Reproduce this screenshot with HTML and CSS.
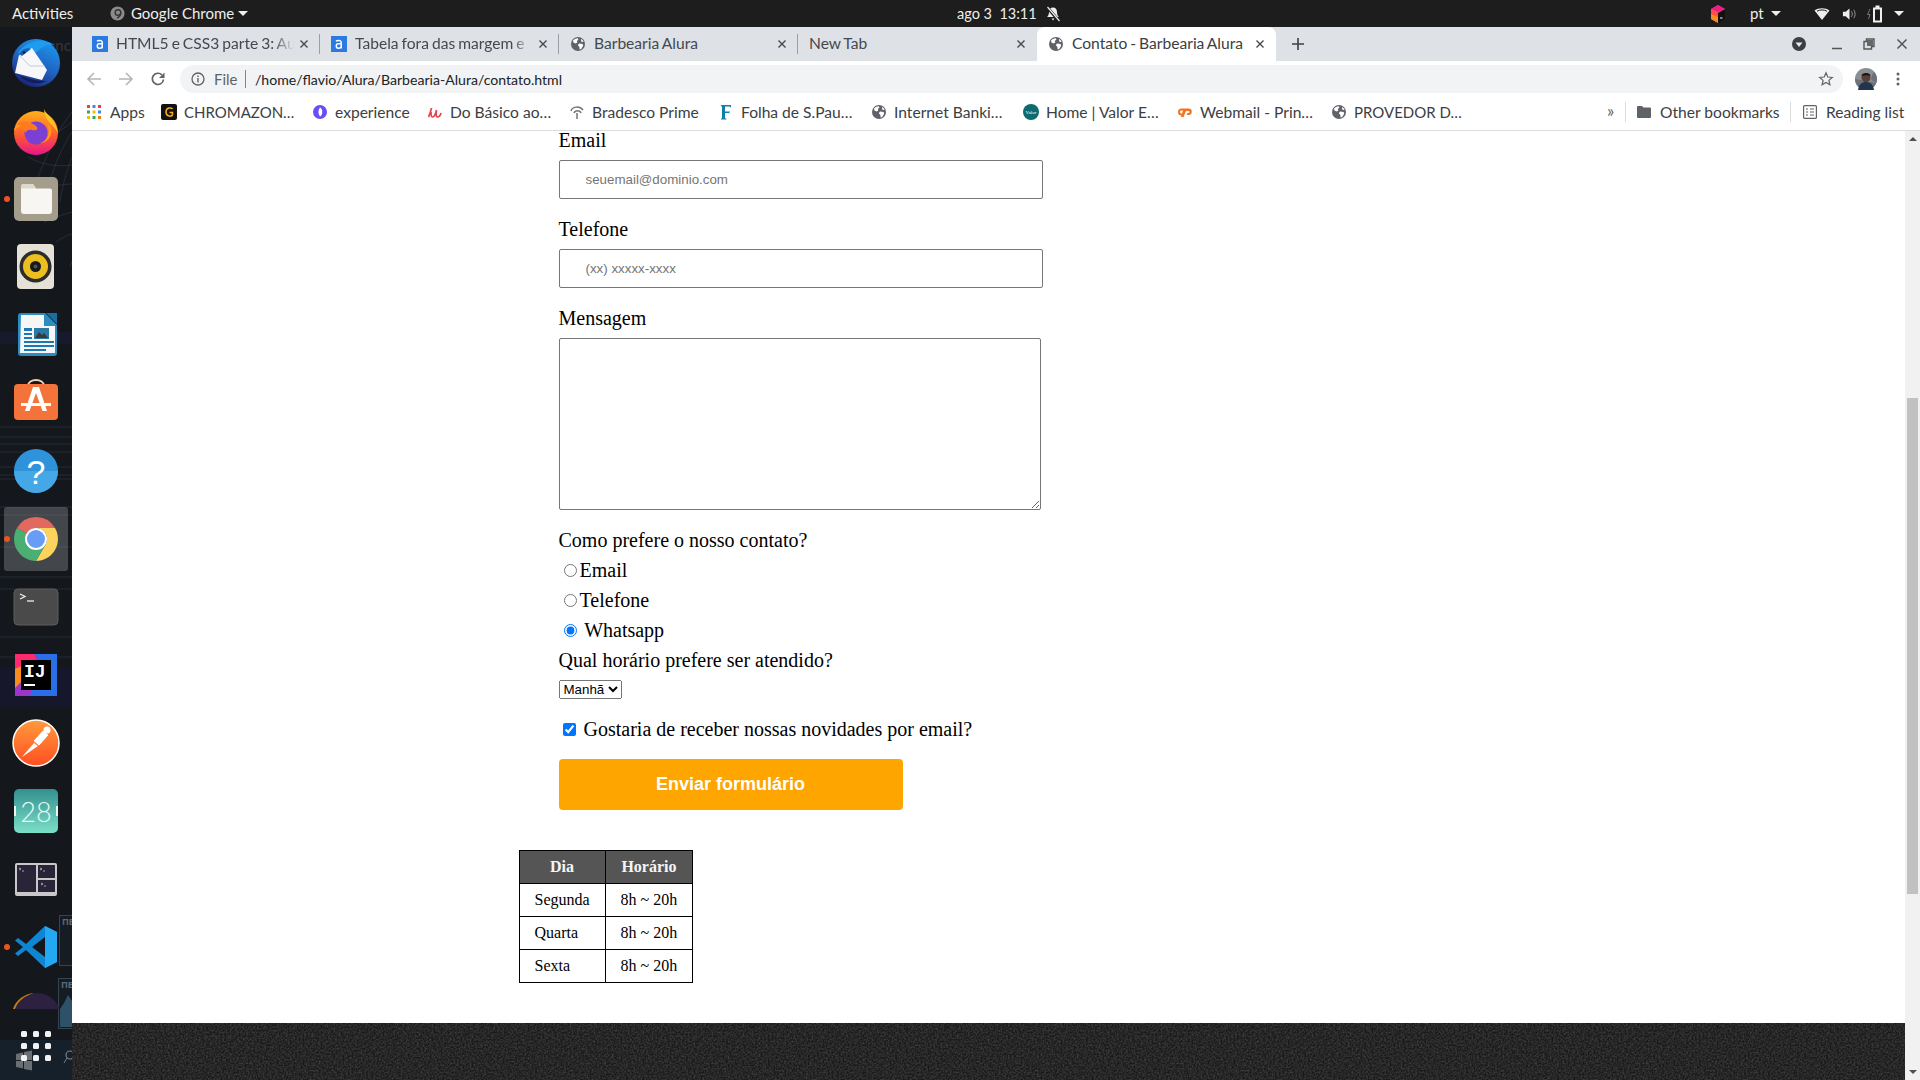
FILE: index.html
```html
<!DOCTYPE html>
<html lang="pt">
<head>
<meta charset="utf-8">
<title>Contato - Barbearia Alura</title>
<link rel="stylesheet" href="styles.css">
</head>
<body>
<svg class="defs" width="0" height="0" aria-hidden="true">
  <defs>
    <symbol id="globe" viewBox="0 0 16 16">
      <circle cx="8" cy="8" r="7" fill="#5f6368"/>
      <path d="M3 4.500c1.500-1.600 3.300-2.300 4.800-2.300l.6 1.400-1.500 1.300.4 1.500-1.700 1.100-2.200-.9zM9 7.500l3.700.4.500 1.800-2 3.300-1.500.4-.4-2.600-1.500-1.500zM11 2.800l2 1.700.5 1.500-2.200-.3z" fill="#fff"/>
    </symbol>
    <symbol id="alura" viewBox="0 0 16 16">
      <rect width="16" height="16" fill="#2a7ae2"/>
      <path d="M5 5.200c1-1 5-1.300 5.200.8V12.500M10.200 7.800H7.300C4.600 7.800 4.600 12.200 7.300 12.200c1.500 0 2.900-.7 2.900-2" fill="none" stroke="#fff" stroke-width="1.500"/>
    </symbol>
    <symbol id="close" viewBox="0 0 10 10">
      <path d="M1.500 1.500l7 7M8.500 1.500l-7 7" stroke="#45494e" stroke-width="1.400" fill="none"/>
    </symbol>
    <linearGradient id="tb" x1=".8" y1="0" x2=".3" y2="1"><stop offset="0" stop-color="#1c9bf0"/><stop offset=".55" stop-color="#1f62c0"/><stop offset="1" stop-color="#1b2272"/></linearGradient>
    <linearGradient id="ff" x1="0" y1="0" x2="0" y2="1"><stop offset="0" stop-color="#ffb11b"/><stop offset=".55" stop-color="#ff5a2e"/><stop offset="1" stop-color="#e8148c"/></linearGradient>
    <linearGradient id="pm" x1="0" y1="0" x2="0" y2="1"><stop offset="0" stop-color="#ff9a3c"/><stop offset="1" stop-color="#ff4f22"/></linearGradient>
    <linearGradient id="cal" x1="0" y1="0" x2="0" y2="1"><stop offset="0" stop-color="#34908f"/><stop offset="1" stop-color="#7be0c8"/></linearGradient>
    <filter id="noise" x="0" y="0" width="100%" height="100%">
      <feTurbulence type="fractalNoise" baseFrequency="0.55" numOctaves="2" seed="4"/>
      <feColorMatrix values="0 0 0 0 1 0 0 0 0 1 0 0 0 0 1 0.3 0 0 0 -0.09"/>
    </filter>
  </defs>
</svg>

<header class="topbar">
  <div class="tb-activities">Activities</div>
  <div class="tb-app">
    <svg class="ic14" viewBox="0 0 16 16"><circle cx="8" cy="8" r="7.500" fill="#8b8b8b"/><circle cx="8.500" cy="7" r="3" fill="none" stroke="#333" stroke-width="1.500"/><path d="M11.500 7c0 3-2 5-4 6" stroke="#333" stroke-width="1.500" fill="none"/></svg>
    <span>Google Chrome</span><i class="caret caret-app"></i>
  </div>
  <div class="tb-clock">
    <span class="tb-time">ago 3&nbsp; 13:11</span>
    <svg class="ic16" viewBox="0 0 16 16"><path d="M8 1.500c-2.500 0-4 1.800-4 4.500 0 2.500-.8 4-2 5h12c-1.200-1-2-2.500-2-5 0-2.700-1.500-4.500-4-4.500zM6.500 12.500h3L8 14.500z" fill="#eee"/><path d="M2 1l12 14" stroke="#1d1d1d" stroke-width="3"/><path d="M2.500 1l12 14" stroke="#eee" stroke-width="1.200"/></svg>
  </div>
  <div class="tb-tray">
    <svg class="tray-jb" viewBox="0 0 14 18"><path d="M7 0l7 4v10l-7 4-7-4V4z" fill="#111"/><path d="M7 0l7 4-7 4v10l-7-4V4z" fill="#fb4f4f"/><path d="M7 0l7 4-7 3-7-3z" fill="#e91e8c"/><path d="M0 9v5l7 4V12z" fill="#f98c1f"/><path d="M9 13h2.500" stroke="#fff"/></svg>
    <span class="tray-pt">pt</span><i class="caret caret-pt"></i>
    <svg class="tray-wifi" viewBox="0 0 16 14"><path d="M8 13L.5 3.500C4.500.5 11.500.5 15.500 3.500z" fill="#eee"/><path d="M3 4.200c3-1.700 7-1.700 10 0" stroke="#1d1d1d" fill="none"/></svg>
    <svg class="tray-vol" viewBox="0 0 16 14"><path d="M1 4.500h3L8 1v12L4 9.500H1z" fill="#eee"/><path d="M10 4c1.300 1.700 1.300 4.300 0 6M12.500 2.500c2 2.500 2 6.500 0 9" stroke="#999" fill="none"/></svg>
    <svg class="tray-bat" viewBox="0 0 18 18"><path d="M3 4L.5 9.500H3L1.500 14" stroke="#777" fill="none"/><path d="M8.500 2.500V.5h4v2h2.500v15H6v-15z" fill="#eee"/><rect x="8" y="4.500" width="5" height="11" fill="#1d1d1d"/></svg>
    <i class="caret caret-end"></i>
  </div>
</header>

<div class="desktop">
  <nav class="dock">
    <svg class="wallpaper" viewBox="0 0 72 1053" width="72" height="1053" aria-hidden="true">
      <g fill="none" stroke="#39404a" stroke-width=".7" opacity=".75">
        <path d="M38 150C50 120 60 100 72 85M48 160C55 135 65 115 72 105M60 175c3-20 8-35 12-45M28 130c14 8 30 10 44 8M32 165c14-4 28-8 40-8M44 195c10-4 20-8 28-10M36 115c12-4 24-10 36-20M56 215c6-4 11-7 16-8M70 240l2-6"/>
      </g>
      <g stroke="#20262d" stroke-width="1.500" opacity=".9">
        <path d="M0 400h72M0 410h72M0 417h72M0 425h72M0 440h72M0 448h72M0 452h72M0 480h72M0 488h72M0 520h72M0 550h72M0 562h72M0 610h72M0 630h72"/>
      </g>
      <rect y="305" width="72" height="12" fill="#171a2c"/>
      <rect y="640" width="72" height="40" fill="#16172a"/>
      <text x="47" y="24" class="wp-text">unc</text>
      <rect x="59.500" y="888.500" width="14" height="50" fill="#151c24" stroke="#37434f"/>
      <text x="62" y="898" class="wp-ru">ПЕ</text>
      <rect x="58.500" y="951.500" width="15" height="50" fill="#151c24" stroke="#37434f"/>
      <text x="61" y="961" class="wp-ru">ПЕ</text>
      <path d="M60 1000v-18l4-6 4-8 4 6v26z" fill="#2d5268"/>
      <rect y="1013" width="72" height="40" fill="#15202a"/>
      <path d="M16 1027l7-1.500V1033h-7zM24 1025l8-1.500V1033h-8zM16 1034h7v7.500l-7-1.500zM24 1034h8v9.500l-8-1.500z" fill="#6a6f74"/>
      <circle cx="70" cy="1028" r="4" fill="none" stroke="#7a8087" stroke-width="1.200"/><path d="M67 1031l-3 5" stroke="#7a8087"/>
    </svg>
    <div class="dock-list">
      <div class="dock-item"><svg class="app" viewBox="0 0 48 48"><circle cx="24" cy="24" r="24" fill="url(#tb)"/><path d="M6 14C12 4 30-3 42 6c-7-1-12 2-16 6l-8 4z" fill="#1d9cf0"/><path d="M7 16L20 9l15 22-5 10L3 34z" fill="#f7f7f9"/><path d="M7 16l11 11 15 0" fill="none" stroke="#b9c0cc" stroke-width=".8"/><path d="M7 15c3-5 8-7 12-5l-9 7z" fill="#1b5fb4"/><circle cx="12" cy="13.500" r="1.200" fill="#0b1a3a"/><path d="M8 37c8 8 18 9 26 5-8 0-18-2-26-5z" fill="#141b5e"/></svg></div>
      <div class="dock-item"><svg class="app" viewBox="0 0 48 48"><circle cx="24" cy="26" r="22" fill="url(#ff)"/><path d="M32 2c2 6 12 10 14 24-4-8-14-12-14-24z" fill="#ffc21f"/><path d="M6 14c-1 3-3 5-4 10 4-5 10-7 16-6-4-3-9-3-12-4z" fill="#ff9a1f"/><circle cx="24" cy="26" r="11.500" fill="#7b3fd4"/><path d="M4 17c6-4 14-3 20 2 3 3 1 5-4 4-3-1-5 0-7 3 0-5-5-8-9-9z" fill="#ff7a1f"/><path d="M35 17c4 8 1 17-7 19 7 0 13-7 11-15z" fill="#ff9a1f"/></svg></div>
      <div class="dock-item has-dot"><svg class="app" viewBox="0 0 48 48"><rect x="2" y="2" width="44" height="44" rx="5" fill="#a49d8b"/><path d="M9 12a3 3 0 0 1 3-3h9l3 4.500h14a2 2 0 0 1 2 2V36a3 3 0 0 1-3 3H12a3 3 0 0 1-3-3z" fill="#f8f6f3"/><path d="M9 12a3 3 0 0 1 3-3h9l3 4.500H9z" fill="#dcd8cd"/></svg></div>
      <div class="dock-item"><svg class="app" viewBox="0 0 48 48"><rect x="5" y="1" width="37" height="45" rx="4" fill="#e6e1d6"/><circle cx="23.500" cy="23.500" r="16" fill="#2d2c2b"/><circle cx="23.500" cy="23.500" r="12.500" fill="#eabf1f"/><circle cx="23.500" cy="23.500" r="5.500" fill="#1a1a1a"/><circle cx="23.500" cy="23.500" r="2" fill="#55504a"/></svg></div>
      <div class="dock-item"><svg class="app" viewBox="0 0 48 48"><path d="M9 2h24l12 12v28a3 3 0 0 1-3 3H9a3 3 0 0 1-3-3V5a3 3 0 0 1 3-3z" fill="#2a8cc0"/><path d="M9 4h23v11h11v27H8z" fill="#f6f6f6"/><path d="M34 2l11 0v11z" fill="#1a6f9e"/><path d="M12 17h8v3h-8zM12 22h8v2h-8zM12 26h8v2h-8zM12 30h30v2H12zM12 34h30v2H12zM12 38h22v2H12z" fill="#1a78b4"/><rect x="22" y="17" width="15" height="11" fill="#2a7aa5"/><path d="M23 27l4-6 3 3 2-2 4 5z" fill="#3a3a3a"/></svg></div>
      <div class="dock-item"><svg class="app" viewBox="0 0 48 48"><path d="M16 7c0-8 16-8 16 0" fill="none" stroke="#f3d3ae" stroke-width="2"/><rect x="2" y="5" width="44" height="36" rx="4" fill="#f4733a"/><path d="M21 8h6l8 24h-4.500L24 14l-6.500 18H13z" fill="#fff"/><path d="M9 24h30v3H9z" fill="#fff"/></svg></div>
      <div class="dock-item"><svg class="app" viewBox="0 0 48 48"><circle cx="24" cy="24" r="22" fill="#2f93dc"/><path d="M2 24h44a22 22 0 0 1-44 0z" fill="#45a7e6"/><text x="24" y="37" class="app-help">?</text></svg></div>
      <div class="dock-item has-dot active-item"><svg class="app" viewBox="0 0 48 48"><path d="M24 2A22 22 0 0 1 43 13H24A11 11 0 0 0 14.500 18.500L5 13A22 22 0 0 1 24 2Z" fill="#db4437"/><path d="M43 13A22 22 0 0 1 24 46L33.500 29.500A11 11 0 0 0 24 13Z" fill="#fcc934"/><path d="M5 13A22 22 0 0 0 24 46L33.500 29.500A11 11 0 0 1 14.500 18.500Z" fill="#1e9c52"/><circle cx="24" cy="24" r="11" fill="#fff"/><circle cx="24" cy="24" r="9" fill="#4285f4"/></svg></div>
      <div class="dock-item"><svg class="app" viewBox="0 0 48 48"><rect x="2" y="6" width="44" height="36" rx="4" fill="#4a4a4a" stroke="#5c5c5c"/><path d="M8 11l5 2.500-5 2.500" fill="none" stroke="#eee" stroke-width="1.300"/><path d="M15 18h7" stroke="#eee" stroke-width="1.300"/></svg></div>
      <div class="dock-item"><svg class="app" viewBox="0 0 48 48"><rect x="3" y="3" width="42" height="42" fill="#2a6fe8"/><path d="M3 3h19l6 6-10 36H3z" fill="#9b36c8"/><path d="M3 3h19l3 6-12 10-10 2z" fill="#ff2a6d"/><path d="M3 18l6-3v16l-6 6z" fill="#f98c1f"/><rect x="9" y="9" width="30" height="30" fill="#000"/><text x="12" y="26" class="app-ij">IJ</text><rect x="12" y="33" width="11" height="2" fill="#fff"/></svg></div>
      <div class="dock-item"><svg class="app" viewBox="0 0 48 48"><circle cx="24" cy="24" r="23" fill="url(#pm)" stroke="#fff" stroke-width="1.500"/><path d="M10 38l12-14 4 3z" fill="#fff"/><path d="M21 22l10-11 6 5-10 11z" fill="#fff" stroke="#ff7a33"/><circle cx="35" cy="11" r="3.500" fill="#fff"/></svg></div>
      <div class="dock-item"><svg class="app" viewBox="0 0 48 48"><rect x="2" y="2" width="44" height="44" rx="5" fill="url(#cal)"/><rect x="2" y="19" width="2" height="10" fill="#e8f6f2"/><rect x="44" y="19" width="2" height="10" fill="#e8f6f2"/><text x="24" y="35" class="app-cal">28</text></svg></div>
      <div class="dock-item"><svg class="app" viewBox="0 0 48 48"><rect x="3" y="8" width="42" height="33" rx="2" fill="#c8c8c8"/><rect x="5" y="10" width="19" height="27" fill="#2a2438"/><rect x="26" y="10" width="17" height="13" fill="#2a2438"/><rect x="26" y="25" width="17" height="12" fill="#2a2438"/><path d="M7 13l2 1-2 1M10 16h2M28 13l2 1-2 1M31 16h2M29 28l2 1-2 1M32 31h2" stroke="#ddd" fill="none" stroke-width=".7"/></svg></div>
      <div class="dock-item has-dot"><svg class="app" viewBox="0 0 48 48"><path fill-rule="evenodd" d="M33 3L14 21 6 15 3 17.500 11 24 3 30.500 6 33 14 27 33 45 45 39V9ZM33 14L20 24 33 34Z" fill="#0e86d4"/><path d="M33 3L45 9V39L33 45Z" fill="#24a8f2"/></svg></div>
      <div class="dock-item"><svg class="app" viewBox="0 0 48 48"><circle cx="25" cy="26" r="24" fill="#2c2140"/><path d="M1 18A24 24 0 0 1 22 2C12 5 6 10 3 18z" fill="#c47f1a"/></svg></div>
    </div>
    <div class="show-apps">
      <div class="dots"><i></i><i></i><i></i><i></i><i></i><i></i><i></i><i></i><i></i></div>
    </div>
  </nav>

  <div class="browser">
    <div class="tabstrip">
      <div class="tab sep"><svg class="fav"><use href="#alura"/></svg><span class="tab-title fade">HTML5 e CSS3 parte 3: Au</span><svg class="tab-x"><use href="#close"/></svg></div>
      <div class="tab sep"><svg class="fav"><use href="#alura"/></svg><span class="tab-title fade">Tabela fora das margem e</span><svg class="tab-x"><use href="#close"/></svg></div>
      <div class="tab sep"><svg class="fav glob"><use href="#globe"/></svg><span class="tab-title">Barbearia Alura</span><svg class="tab-x"><use href="#close"/></svg></div>
      <div class="tab"><span class="tab-title">New Tab</span><svg class="tab-x"><use href="#close"/></svg></div>
      <div class="tab tab-active"><svg class="fav glob"><use href="#globe"/></svg><span class="tab-title">Contato - Barbearia Alura</span><svg class="tab-x"><use href="#close"/></svg></div>
      <svg class="newtab" viewBox="0 0 14 14"><path d="M7 1v12M1 7h12" stroke="#3c4043" stroke-width="1.600"/></svg>
      <div class="winctl">
        <svg class="wc-profile" viewBox="0 0 14 14"><circle cx="7" cy="7" r="7" fill="#3c4043"/><path d="M3.500 5.500h7L7 10z" fill="#e8eaed"/></svg>
        <svg class="wc-min" viewBox="0 0 12 12"><path d="M1 10.500h10" stroke="#555" stroke-width="1.500"/></svg>
        <svg class="wc-rest" viewBox="0 0 12 12"><path d="M3.500 1h7.500v7.500H8.500V11H1V3.500h2.500z" fill="none" stroke="#555" stroke-width="1.400"/><rect x="4" y="2" width="6" height="6" fill="#666"/></svg>
        <svg class="wc-close" viewBox="0 0 12 12"><path d="M1.500 1.500l9 9M10.500 1.500l-9 9" stroke="#555" stroke-width="1.500"/></svg>
      </div>
    </div>

    <div class="toolbar">
      <svg class="tool" viewBox="0 0 16 16"><path d="M15 8H2M8 2L2 8l6 6" fill="none" stroke="#b3b6ba" stroke-width="1.600"/></svg>
      <svg class="tool" viewBox="0 0 16 16"><path d="M1 8h13M8 2l6 6-6 6" fill="none" stroke="#b3b6ba" stroke-width="1.600"/></svg>
      <svg class="tool" viewBox="0 0 16 16"><path d="M13.500 8.500A5.600 5.600 0 1 1 12 4" fill="none" stroke="#5f6368" stroke-width="1.700"/><path d="M14.500 1.500V7H9z" fill="#5f6368"/></svg>
      <div class="omnibox">
        <svg class="omni-info" viewBox="0 0 14 14"><circle cx="7" cy="7" r="6" fill="none" stroke="#5f6368" stroke-width="1.300"/><path d="M7 6v4.500M7 3.500v1.500" stroke="#5f6368" stroke-width="1.400"/></svg>
        <span class="omni-file">File</span>
        <span class="omni-url">/home/flavio/Alura/Barbearia-Alura/contato.html</span>
        <svg class="omni-star" viewBox="0 0 16 16"><path d="M8 1.800l1.800 4.200 4.500.4-3.400 3 1 4.400L8 11.500l-3.900 2.300 1-4.400-3.400-3 4.500-.4z" fill="none" stroke="#5f6368" stroke-width="1.200"/></svg>
      </div>
      <svg class="avatar" viewBox="0 0 22 22"><circle cx="11" cy="11" r="11" fill="#8a8f96"/><path d="M0 11a11 11 0 0 0 22 0c0-2-1-5-3-7l-2 3-1 5 6 3z" fill="#6d7278"/><path d="M3 22c1-6 4-8 8-8s7 2 8 8z" fill="#23344f"/><circle cx="11" cy="9.500" r="4.500" fill="#5a3f34"/><path d="M6.500 8c0-4 9-4 9 0-3-1-6-1-9 0z" fill="#1c1714"/></svg>
      <svg class="menu" viewBox="0 0 4 16"><circle cx="2" cy="3" r="1.500" fill="#5f6368"/><circle cx="2" cy="8" r="1.500" fill="#5f6368"/><circle cx="2" cy="13" r="1.500" fill="#5f6368"/></svg>
    </div>

    <div class="bookmarks">
      <div class="bm"><svg class="bm-ic" viewBox="0 0 14 14"><g><rect width="3" height="3" fill="#ea4335"/><rect x="5.500" width="3" height="3" fill="#4285f4"/><rect x="11" width="3" height="3" fill="#ea4335"/><rect y="5.500" width="3" height="3" fill="#34a853"/><rect x="5.500" y="5.500" width="3" height="3" fill="#fbbc05"/><rect x="11" y="5.500" width="3" height="3" fill="#4285f4"/><rect y="11" width="3" height="3" fill="#fbbc05"/><rect x="5.500" y="11" width="3" height="3" fill="#34a853"/><rect x="11" y="11" width="3" height="3" fill="#ea8600"/></g></svg><span>Apps</span></div>
      <div class="bm"><svg class="bm-ic16" viewBox="0 0 16 16"><rect width="16" height="16" rx="2" fill="#111"/><path d="M11.500 5C11 3.500 5 3 5 8s6 5 6.500 2.500V8.500H8.500" fill="none" stroke="#f2b01e" stroke-width="1.500"/></svg><span class="bm-caps">CHROMAZON…</span></div>
      <div class="bm"><svg class="bm-ic16" viewBox="0 0 16 16"><circle cx="8" cy="8" r="7" fill="#6a4ef5"/><path d="M8 3.500c3 1 3 8 0 9-2-2-2-7 0-9z" fill="#fff"/></svg><span>experience</span></div>
      <div class="bm"><svg class="bm-ic16" viewBox="0 0 16 16"><path d="M1.500 13c1-2 3-8 3-9M4 8c0 3 0 5 1.500 5s3-3 4-7c-.5 3-.5 7 1 7s3-2 3.500-4" fill="none" stroke="#e8434f" stroke-width="1.700"/></svg><span>Do Básico ao…</span></div>
      <div class="bm"><svg class="bm-ic16" viewBox="0 0 16 16"><path d="M2 7c1-4 8-6 12-1M5 9c1-3 6-3 7 0M8 9v6" fill="none" stroke="#777" stroke-width="1.500"/></svg><span>Bradesco Prime</span></div>
      <div class="bm"><svg class="bm-ic16" viewBox="0 0 16 16"><path d="M3 1h10v3l-1-1.500H7v5h4l.5-1v3.500l-.5-1H7v5l1.500 1v.5H3V15l1-1V2.500L3 2z" fill="#0f7fa8"/></svg><span>Folha de S.Pau…</span></div>
      <div class="bm"><svg class="bm-ic16"><use href="#globe"/></svg><span>Internet Banki…</span></div>
      <div class="bm"><svg class="bm-ic16" viewBox="0 0 16 16"><circle cx="8" cy="8" r="8" fill="#0c6a70"/><text x="8" y="10" class="valor">Valor</text></svg><span>Home | Valor E…</span></div>
      <div class="bm"><svg class="bm-ic16" viewBox="0 0 16 16"><path d="M7 4.500H4.500a3.500 3.500 0 0 0 0 7H6l1-2H4.500a1.500 1.500 0 0 1 0-3H6L4 13h2.500L9 7h2.500a1 1 0 0 1 0 2H10.500l-1 2h2a3 3 0 0 0 0-6.500z" fill="#f3741c"/></svg><span>Webmail - Prin…</span></div>
      <div class="bm"><svg class="bm-ic16"><use href="#globe"/></svg><span class="bm-caps">PROVEDOR D…</span></div>
      <div class="bm-more">»</div>
      <div class="bm-right">
        <svg class="bm-folder" viewBox="0 0 14 12"><path d="M0 1a1 1 0 0 1 1-1h4l1.500 1.500H13a1 1 0 0 1 1 1V11a1 1 0 0 1-1 1H1a1 1 0 0 1-1-1z" fill="#5f6368"/></svg>
        <span class="bm-other">Other bookmarks</span>
        <svg class="bm-read" viewBox="0 0 14 14"><rect x=".6" y=".6" width="12.800" height="12.800" rx="1" fill="none" stroke="#5f6368" stroke-width="1.200"/><path d="M3 4h2M7 4h4M3 7h2M7 7h4M3 10h2M7 10h4" stroke="#5f6368" stroke-width="1.100"/></svg>
        <span class="bm-list">Reading list</span>
      </div>
    </div>

    <div class="viewport">
      <div class="page">
        <main class="container">
          <form class="form">
            <label class="field-label field-first">Email</label>
            <input class="text-input" type="email" placeholder="seuemail@dominio.com">
            <label class="field-label">Telefone</label>
            <input class="text-input" type="tel" placeholder="(xx) xxxxx-xxxx">
            <label class="field-label">Mensagem</label>
            <textarea class="message"></textarea>
            <div class="line">Como prefere o nosso contato?</div>
            <div class="line"><input type="radio" name="c">Email</div>
            <div class="line"><input type="radio" name="c">Telefone</div>
            <div class="line"><input type="radio" name="c" checked> Whatsapp</div>
            <label class="field-label">Qual horário prefere ser atendido?</label>
            <select class="hour"><option>Manhã</option><option>Tarde</option><option>Noite</option></select>
            <div class="news"><input class="news-check" type="checkbox" checked> Gostaria de receber nossas novidades por email?</div>
            <button class="send" type="button">Enviar formulário</button>
          </form>
          <table class="hours">
            <thead><tr><th>Dia</th><th>Horário</th></tr></thead>
            <tbody>
              <tr><td>Segunda</td><td>8h ~ 20h</td></tr>
              <tr><td>Quarta</td><td>8h ~ 20h</td></tr>
              <tr><td>Sexta</td><td>8h ~ 20h</td></tr>
            </tbody>
          </table>
        </main>
        <footer class="footer"><svg class="footer-noise" width="100%" height="100%"><rect width="100%" height="100%" filter="url(#noise)"/></svg></footer>
      </div>
      <div class="scrollbar">
        <i class="arrow-up"></i>
        <div class="thumb"></div>
        <i class="arrow-down"></i>
      </div>
    </div>
  </div>
</div>
</body>
</html>
```

FILE: styles.css
```css
* { box-sizing: border-box; }
html, body { margin: 0; height: 100%; }
body {
  width: 1920px;
  height: 1080px;
  overflow: hidden;
  display: flex;
  flex-direction: column;
  font-family: "Liberation Serif", serif;
  background: #14181d;
}
svg { display: block; flex: none; }
.defs { position: absolute; }

/* top bar */
.topbar {
  height: 27px;
  flex: none;
  background: #1d1d1d;
  color: #eee;
  font: 15px/27px Lato, "Noto Sans", sans-serif;
  display: flex;
  align-items: center;
}
.tb-activities { width: 110px; padding-left: 12px; }
.tb-app { width: 847px; display: flex; align-items: center; }
.ic14 { width: 15px; height: 15px; }
.tb-app span { margin-left: 6px; width: 107px; white-space: nowrap; }
.caret { display: block; width: 0; height: 0; border-left: 5px solid transparent; border-right: 5px solid transparent; border-top: 5px solid #eee; flex: none; }
.tb-clock { width: 751px; display: flex; align-items: center; }
.tb-time { width: 88px; white-space: nowrap; font-size: 14.5px; }
.ic16 { width: 16px; height: 16px; }
.tb-tray { flex: 1; display: flex; align-items: center; }
.tray-jb { width: 14px; height: 18px; margin-left: 3px; }
.tray-pt { margin-left: 25px; width: 21px; }
.tray-wifi { width: 16px; height: 14px; margin-left: 33px; }
.tray-vol { width: 15px; height: 14px; margin-left: 12px; }
.tray-bat { width: 18px; height: 18px; margin-left: 10px; }
.caret-end { margin-left: 9px; }

.desktop { flex: 1; display: flex; min-height: 0; }

/* dock */
.dock { position: relative; width: 72px; flex: none; display: flex; flex-direction: column; background: #14181d; overflow: hidden; }
.wallpaper { position: absolute; left: 0; top: 0; }
.wp-text { font: 15px Lato, sans-serif; fill: #33373c; }
.wp-ru { font: bold 9px "Noto Sans", sans-serif; fill: #5a6a78; }
.dock-list { position: relative; height: 982px; padding-top: 2px; overflow: hidden; flex: none; }
.dock-item { position: relative; height: 68px; display: flex; align-items: center; justify-content: center; }
.app { width: 48px; height: 48px; }
.has-dot::before { content: ""; position: absolute; left: 4px; top: 31px; width: 6px; height: 6px; border-radius: 50%; background: #e95420; z-index: 1; }
.active-item::after { content: ""; position: absolute; left: 4px; right: 4px; top: 2px; bottom: 2px; border-radius: 3px; background: rgba(255,255,255,.2); }
.app-help { font: 34px "Liberation Sans", sans-serif; fill: #fff; text-anchor: middle; }
.app-ij { font: bold 18px "Liberation Mono", monospace; fill: #fff; }
.app-cal { font: 300 27px Lato, sans-serif; fill: #eafaf5; text-anchor: middle; }
.valor { font: 5px "Liberation Serif", serif; fill: #fff; text-anchor: middle; }
.show-apps { position: relative; flex: 1; display: flex; justify-content: center; padding-top: 22px; }
.dots { display: grid; grid-template-columns: repeat(3, 6px); grid-auto-rows: 6px; gap: 6px; }
.dots i { display: block; background: #f2f2f2; border-radius: 1.500px; }

/* browser */
.browser { flex: 1; min-width: 0; display: flex; flex-direction: column; background: #fff; font-family: Lato, "Noto Sans", sans-serif; font-size: 15.6px; color: #3c4043; }
.tabstrip { height: 34px; flex: none; background: #dee1e6; display: flex; align-items: center; padding-left: 9px; }
.tab { position: relative; width: 239px; height: 34px; flex: none; display: flex; align-items: center; padding: 0 6px 0 11px; color: #45494e; }
.sep::after { content: ""; position: absolute; right: 0; top: 7px; bottom: 7px; width: 1px; background: #9aa0a6; }
.fav { width: 16px; height: 16px; margin-right: 8px; }
.tab-title { flex: 1; min-width: 0; white-space: nowrap; overflow: hidden; padding-bottom: 2px; word-spacing: -1px; }
.fade { -webkit-mask-image: linear-gradient(90deg, #000 88%, transparent 100%); mask-image: linear-gradient(90deg, #000 88%, transparent 100%); }
.tab-x { width: 10px; height: 10px; margin: 0 5px 0 5px; }
.tab-active { background: #fff; border-radius: 8px 8px 0 0; color: #3c4043; }
.newtab { width: 14px; height: 14px; margin-left: 15px; }
.winctl { margin-left: auto; display: flex; align-items: center; padding-right: 12px; }
.wc-profile { width: 14px; height: 14px; }
.wc-min { width: 12px; height: 12px; margin-left: 25px; }
.wc-rest { width: 12px; height: 12px; margin-left: 20px; }
.wc-close { width: 12px; height: 12px; margin-left: 21px; }

.toolbar { height: 32px; flex: none; display: flex; align-items: flex-end; padding-left: 14px; background: #fff; }
.tool { width: 16px; height: 16px; margin: 0 16px 6px 0; }
.tool:nth-child(3) { margin-right: 14px; }
.omnibox { width: 1663px; height: 28px; flex: none; background: #f1f3f4; border-radius: 14px; display: flex; align-items: center; padding: 0 9px 0 11px; }
.omni-info { width: 14px; height: 14px; }
.omni-file { margin-left: 9px; width: 32px; height: 18px; line-height: 18px; color: #5f6368; border-right: 1px solid #80868b; font-size: 15px; }
.omni-url { margin-left: 9px; color: #202124; white-space: nowrap; font-size: 14.1px; }
.omni-star { width: 16px; height: 16px; margin-left: auto; }
.avatar { width: 22px; height: 22px; margin: 0 0 3px 12px; }
.menu { width: 4px; height: 16px; margin: 0 0 6px 19px; }

.bookmarks { height: 38px; flex: none; display: grid; grid-template-columns: 74px 151px 115px 142px 149px 153px 152px 154px 154px 276px 19px 1fr; align-items: center; padding-left: 15px; border-bottom: 1px solid #dadce0; background: #fff; }
.bm { display: flex; align-items: center; white-space: nowrap; }
.bm-caps { font-size: 15px; }
.bm-ic { width: 14px; height: 14px; margin-right: 9px; }
.bm-ic16 { width: 16px; height: 16px; margin-right: 7px; }
.bm-more { height: 20px; line-height: 18px; font-size: 17px; color: #5f6368; border-right: 1px solid #dadce0; }
.bm-right { display: flex; align-items: center; }
.bm-folder { width: 14px; height: 12px; margin-left: 11px; }
.bm-other { margin-left: 9px; width: 131px; height: 20px; line-height: 20px; border-right: 1px solid #dadce0; white-space: nowrap; }
.bm-read { width: 14px; height: 14px; margin-left: 12px; }
.bm-list { margin-left: 9px; white-space: nowrap; }

/* viewport */
.viewport { flex: 1; min-height: 0; display: flex; }
.page { flex: 1; min-width: 0; display: flex; flex-direction: column; overflow: hidden; background: #fff; color: #000; font-family: "Liberation Serif", serif; }
.container { flex: 1; width: 940px; margin: 0 auto; }
.form { margin: 0 0 0 40px; font-size: 20px; line-height: 23px; }
.field-label { display: block; margin-bottom: 8px; }
.field-first { line-height: 19px; margin-bottom: 10px; }
.text-input { display: block; width: 484px; height: 39px; padding: 0 26px; margin-bottom: 19px; border: 1px solid #767676; border-radius: 2px; background: #fff; font: 13.333px "Liberation Sans", sans-serif; }
.message { display: block; width: 482px; height: 172px; margin-bottom: 19px; border: 1px solid #767676; border-radius: 2px; font: 13.333px "Liberation Mono", monospace; }
.line { margin-bottom: 7px; white-space: nowrap; }
.hour { display: block; margin-bottom: 19px; font: 13.333px "Liberation Sans", sans-serif; }
.news { margin-bottom: 18px; white-space: nowrap; }
.news-check { margin-left: 4px; }
.send { display: block; width: 344px; height: 51px; padding: 0; border: 0; border-radius: 4px; background: #ffa500; color: #fff; font: bold 18px "Liberation Sans", sans-serif; }
.hours { margin-top: 40px; border-collapse: collapse; font-size: 16px; line-height: 18px; }
.hours th, .hours td { padding: 7px 15px; border: 1px solid #000; }
.hours th { background: #555; color: #f5f5f5; font-weight: bold; }
.hours td { text-align: left; }
.footer { height: 57px; flex: none; background: #191919; }

.scrollbar { position: relative; width: 15px; flex: none; background: #f1f1f1; display: flex; flex-direction: column; align-items: center; padding-top: 6px; }
.thumb { width: 11px; height: 496px; margin-top: 257px; background: #c1c1c1; }
.arrow-up, .arrow-down { display: block; width: 0; height: 0; border-left: 4px solid transparent; border-right: 4px solid transparent; }
.arrow-up { border-bottom: 4px solid #505050; }
.arrow-down { margin-top: auto; margin-bottom: 6px; border-top: 4px solid #505050; }
```
